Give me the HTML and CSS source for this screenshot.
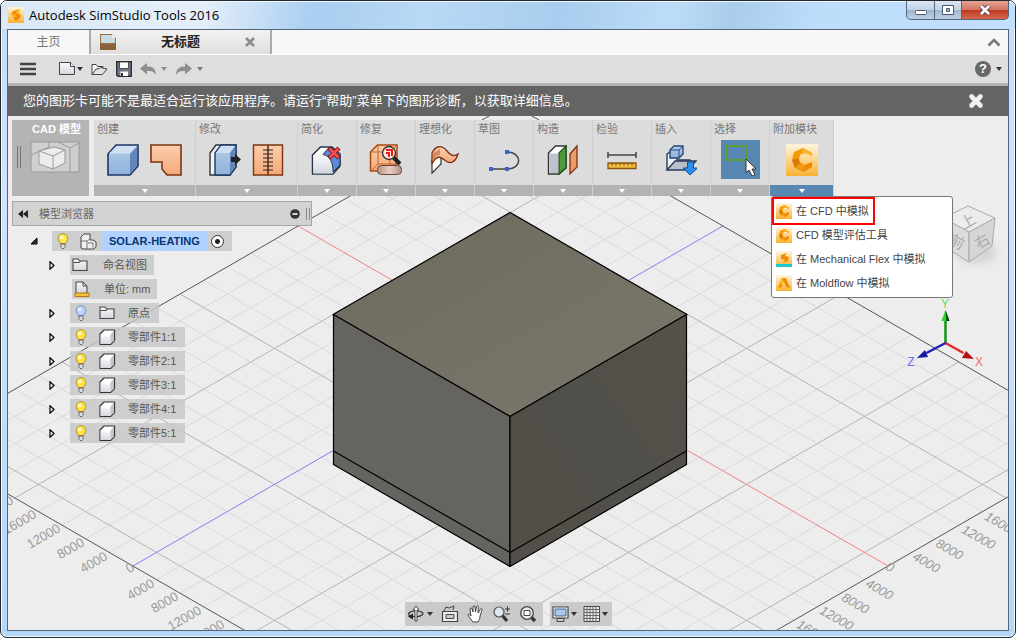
FILE: index.html
```html
<!DOCTYPE html>
<html lang="zh-CN">
<head>
<meta charset="utf-8">
<title>Autodesk SimStudio Tools 2016</title>
<link rel="stylesheet" href="styles.css">
</head>
<body>
<svg class="defs" width="0" height="0" aria-hidden="true">
  <defs>
    <linearGradient id="gBlue" x1="0" y1="0" x2="0" y2="1"><stop offset="0" stop-color="#b4cdea"/><stop offset="1" stop-color="#8fb2dc"/></linearGradient>
    <linearGradient id="gOrange" x1="0" y1="0" x2="0" y2="1"><stop offset="0" stop-color="#fccfae"/><stop offset="1" stop-color="#f5a878"/></linearGradient>
    <linearGradient id="gAmber" x1="0" y1="0" x2="0" y2="1"><stop offset="0" stop-color="#fff6df"/><stop offset="1" stop-color="#f9b233"/></linearGradient>
    <linearGradient id="gGrey" x1="0" y1="0" x2="0" y2="1"><stop offset="0" stop-color="#fafafa"/><stop offset="1" stop-color="#d2d6de"/></linearGradient>
    <linearGradient id="gTop" x1="0" y1="0" x2="1" y2="1"><stop offset="0" stop-color="#6e6a5e"/><stop offset="1" stop-color="#7c776c"/></linearGradient>
    <linearGradient id="gRight" x1="0" y1="1" x2="1" y2="0"><stop offset="0" stop-color="#544f48"/><stop offset="0.5" stop-color="#504f49"/><stop offset="1" stop-color="#56524a"/></linearGradient>
    <linearGradient id="gSkin" x1="0" y1="0" x2="1" y2="0"><stop offset="0" stop-color="#b98f85"/><stop offset="0.5" stop-color="#e9cfc6"/><stop offset="1" stop-color="#b98f85"/></linearGradient>
    <symbol id="bulb" viewBox="0 0 12 16">
      <path d="M6 .7a4.8 4.8 0 0 1 4.8 4.8c0 2-1.600 3-2.300 5h-5c-.7-2-2.300-3-2.300-5A4.800 4.800 0 0 1 6 .7z" fill="#ffe74a" stroke="#b5902a"/>
      <circle cx="4.800" cy="4.500" r="1.800" fill="#fffbd0"/>
      <path d="M4 11h4v3.500l-1 1H5l-1-1z" fill="#ddd" stroke="#555" stroke-width=".8"/>
    </symbol>
    <symbol id="bulbBlue" viewBox="0 0 12 16">
      <path d="M6 .7a4.800 4.800 0 0 1 4.800 4.800c0 2-1.600 3-2.300 5h-5c-.7-2-2.300-3-2.300-5A4.800 4.800 0 0 1 6 .7z" fill="#bcd3fb" stroke="#7791c4"/>
      <circle cx="4.800" cy="4.500" r="1.800" fill="#eef4ff"/>
      <path d="M4 11h4v3.500l-1 1H5l-1-1z" fill="#ddd" stroke="#555" stroke-width=".8"/>
    </symbol>
    <symbol id="part" viewBox="0 0 17 17">
      <path d="M1 5l4-4h10.500v10.500l-4 4H1z" fill="#fff" stroke="#333" stroke-width="1.200" stroke-linejoin="round"/>
      <path d="M1.600 5.500h9.900v9.500H1.600z" fill="url(#gGrey)"/><path d="M11.500 5.500l3.500-4v10l-3.500 3.500z" fill="#bfc4ce"/>
    </symbol>
    <symbol id="folder" viewBox="0 0 17 14">
      <path d="M1 12.500V1h5l1.500 2H15v9.500z" fill="url(#gGrey)" stroke="#444" stroke-width="1.100"/><path d="M1.500 4.500h6l1-1.300" fill="none" stroke="#444"/>
    </symbol>
    <symbol id="cfd" viewBox="0 0 32 32">
      <path d="M0 0h32v32H0z" fill="url(#gAmber)"/>
      <path d="M26 9l-9-5-9 4-2 8 3 8 8 4 9-5v-5l-7 3-5-3-1-4 2-4 5-1 6 3z" fill="#f39a0d"/>
      <path d="M26 9l-9-5-1 6 4-1 6 3z" fill="#f9b32a"/><path d="M6 16l6-2 2 5-5 5z" fill="#d97a06"/><path d="M17 28l2-7 7-3v5z" fill="#e88a08"/>
    </symbol>
    <symbol id="more" viewBox="0 0 6 4"><path d="M0 0h6L3 4z" fill="currentColor"/></symbol>
    <symbol id="twisty" viewBox="0 0 6 9"><path d="M1 .8l4 3.700-4 3.700z" fill="#fff" stroke="#000" stroke-width="1.200"/></symbol>
  </defs>
</svg>

<div class="window">
  <header class="titlebar">
    <svg class="logo" width="16" height="16" viewBox="0 0 16 16"><path d="M0 0h16v16H0z" fill="url(#gAmber)"/><path d="M12 2L5 4 3 7l3 3v2l2 2 4-3 1-3-4-2z" fill="#f08c00"/><path d="M12 2L7 6l2 0 4 2-1-2z" fill="#ffc53a"/><path d="M3 7l4 0 2 3-3 0z" fill="#ffb21c"/></svg>
    <h1 class="title">Autodesk SimStudio Tools 2016</h1>
    <div class="win-buttons">
      <button class="win-btn" aria-label="最小化"><svg width="14" height="12"><rect x="1.500" y="6.500" width="11" height="4" rx="1" fill="#fff" stroke="#4c5a70"/></svg></button>
      <button class="win-btn win-max" aria-label="最大化"><svg width="14" height="12"><path d="M1.500 1.500h11v9h-11z" fill="#fff" stroke="#4c5a70"/><path d="M5.500 4.500h3v3h-3z" fill="#9db8d4" stroke="#4c5a70"/></svg></button>
      <button class="win-btn win-close" aria-label="关闭"><svg width="14" height="12"><path d="M3 2l8 8M11 2l-8 8" stroke="#5b3b42" stroke-width="4.500"/><path d="M3 2l8 8M11 2l-8 8" stroke="#fff" stroke-width="2.600"/></svg></button>
    </div>
  </header>

  <main class="app">
    <nav class="tabs">
      <button class="tab">主页</button>
      <div class="tab tab-active">
        <svg width="17" height="16"><path d="M0 0h12l4 4v12H0z" fill="#9a7048"/><path d="M1 1h11l3 3v5H1z" fill="#c5dbe0"/><path d="M0 9l8 2 8-2v7H0z" fill="#8a6038"/><path d="M12 0v4h4z" fill="#f0f0e8"/></svg>
        <span class="tab-name">无标题</span>
        <button class="icon-btn" aria-label="关闭标签"><svg width="12" height="12"><path d="M2 2l8 8M10 2l-8 8" stroke="#8d8d8d" stroke-width="2.600"/></svg></button>
      </div>
      <button class="icon-btn collapse" aria-label="折叠"><svg width="14" height="9"><path d="M1.500 7.500L7 2l5.500 5.500" fill="none" stroke="#777" stroke-width="2.500"/></svg></button>
    </nav>

    <div class="toolbar">
      <button class="icon-btn tb-menu" aria-label="菜单"><svg width="18" height="14"><path d="M1 2h16M1 7h16M1 12h16" stroke="#444" stroke-width="2.600"/></svg></button>
      <button class="icon-btn tb-new" aria-label="新建"><svg width="24" height="14"><path d="M.5.5h11l4 4v8H.5z" fill="url(#gGrey)" stroke="#444"/><path d="M11.500.5v4h4" fill="#fff" stroke="#444"/><path d="M18 5h6l-3 4z" fill="#333"/></svg></button>
      <button class="icon-btn" aria-label="打开"><svg width="17" height="13"><path d="M1 11.500V1.500h4l1.500 2H12v2.500" fill="#f4f4f4" stroke="#444"/><path d="M1 11.500L5 6l3-.3L9.500 4.500 16 6l-4.500 5.500z" fill="#dfe3ea" stroke="#444"/></svg></button>
      <button class="icon-btn" aria-label="保存"><svg width="16" height="16"><path d="M.7.7h14.600v14.600H2L.7 14z" fill="#707886" stroke="#2b2f38" stroke-width="1.400"/><path d="M3.500 1h9v6.500h-9z" fill="#fafafa" stroke="#333" stroke-width=".8"/><path d="M4.500 10.500h7.500v4.500H4.500z" fill="#fff"/><path d="M5 12h2v3H5z" fill="#333"/></svg></button>
      <button class="icon-btn" aria-label="撤消"><svg width="28" height="13"><path d="M0 5.500L7 0v3.500c5 0 9 1.500 9 8.500-2-3.500-4-4-9-4v3.500z" fill="#8e8e8e"/><path d="M21 4h6l-3 4z" fill="#8e8e8e"/></svg></button>
      <button class="icon-btn" aria-label="重做"><svg width="28" height="13"><path d="M16 5.500L9 0v3.500C4 3.500 0 5 0 12c2-3.500 4-4 9-4v3.500z" fill="#8e8e8e"/><path d="M21 4h6l-3 4z" fill="#777"/></svg></button>
      <button class="help" aria-label="帮助"><span class="help-mark">?</span><svg width="6" height="4"><use href="#more"/></svg></button>
    </div>

    <div class="notice">
      <p class="notice-text">您的图形卡可能不是最适合运行该应用程序。请运行“帮助”菜单下的图形诊断，以获取详细信息。</p>
      <button class="icon-btn" aria-label="关闭通知"><svg width="16" height="16"><path d="M3.500 3.500l9 9M12.500 3.500l-9 9" stroke="#f0f0f0" stroke-width="4.600" stroke-linecap="round"/></svg></button>
    </div>

    <section class="workspace">
      <svg class="scene" viewBox="8 116 1000 514" preserveAspectRatio="xMidYMid slice">
        <g transform="matrix(23.600 13.600 -23.600 13.600 510.500 348.400)" fill="none">
          <path class="line minor" d="M-8-9V16M-7-9V16M-6-9V16M-4-9V16M-3-9V16M-2-9V16M-1-9V16M1-9V16M2-9V16M3-9V16M4-9V16M6-9V16M7-9V16M8-9V16M9-9V16M11-9V16M12-9V16M13-9V16M14-9V16M-9-8H16M-9-7H16M-9-6H16M-9-4H16M-9-3H16M-9-2H16M-9-1H16M-9 1H16M-9 2H16M-9 3H16M-9 4H16M-9 6H16M-9 7H16M-9 8H16M-9 9H16M-9 11H16M-9 12H16M-9 13H16M-9 14H16"/>
          <path class="line major" d="M-5-9V16M5-9V16M10-9V16M15-9V16M-9-5H16M-9 5H16M-9 10H16M-9 15H16"/>
          <path class="line axis-x" d="M-9 0H16"/>
          <path class="line axis-z" d="M0-9V16"/>
          <path class="line edge" d="M-9-9H16V16H-9z"/>
        </g>
        <g class="ticks ticks-left">
          <text transform="translate(12 499) rotate(-30)">20000</text>
          <text transform="translate(35 513) rotate(-30)">16000</text>
          <text transform="translate(59 527) rotate(-30)">12000</text>
          <text transform="translate(83 541) rotate(-30)">8000</text>
          <text transform="translate(106 555) rotate(-30)">4000</text>
          <text transform="translate(133 566) rotate(-30)">0</text>
          <text transform="translate(153 582) rotate(-30)">4000</text>
          <text transform="translate(177 595) rotate(-30)">8000</text>
          <text transform="translate(200 609) rotate(-30)">12000</text>
          <text transform="translate(223 623) rotate(-30)">16000</text>
        </g>
        <g class="ticks ticks-right">
          <text transform="translate(986 515) rotate(30)">16000</text>
          <text transform="translate(963 528) rotate(30)">12000</text>
          <text transform="translate(937 542) rotate(30)">8000</text>
          <text transform="translate(914 555) rotate(30)">4000</text>
          <text transform="translate(887 565) rotate(30)">0</text>
          <text transform="translate(867 582) rotate(30)">4000</text>
          <text transform="translate(843 596) rotate(30)">8000</text>
          <text transform="translate(821 609) rotate(30)">12000</text>
          <text transform="translate(798 623) rotate(30)">16000</text>
        </g>
        <g stroke="#000" stroke-width="1.200" stroke-linejoin="round">
          <path d="M510 212.500l177 102-177 102-177-102z" fill="url(#gTop)"/>
          <path d="M333.500 314.500L510 416.500v150L333.500 464.500z" fill="#656460"/>
          <path d="M686.500 314.500L510 416.500v150l176.500-102z" fill="url(#gRight)"/>
          <path d="M333.500 451l176.500 101.500L686.500 451" fill="none"/>
        </g>
        <g>
          <ellipse cx="976" cy="252" rx="20" ry="12" fill="#bbb" opacity=".5" filter="blur(4px)"/>
          <path d="M968 206l27 12-26 14-26-14z" fill="#ececec" stroke="#aaa"/>
          <path d="M943 218l26 14v30l-24-15z" fill="#dcdcdc" stroke="#aaa"/>
          <path d="M995 218l-26 14v30l23-16z" fill="#d6d6d6" stroke="#aaa"/>
          <g class="cube-text"><text transform="translate(968 221) rotate(-30)">上</text><text transform="translate(957 242) rotate(28)">前</text><text transform="translate(982 241) rotate(-30)">右</text></g>
        </g>
        <g class="triad">
          <path d="M945.500 343v-24" stroke="#159015" stroke-width="2.500"/><path d="M941.500 321l4-11 4 11z" fill="#25d425"/><path d="M945.500 310l4 11h-3z" fill="#0a3d0a"/>
          <path d="M945.500 343l18 10" stroke="#e02a2a" stroke-width="2.500"/><path d="M974 359l-12-1 4-7z" fill="#b31313"/>
          <path d="M945.500 343l-19 10" stroke="#2020b8" stroke-width="2.500"/><path d="M917 358l8-8 3 7z" fill="#1515a8"/>
          <text x="945" y="308" fill="#5ddb5d">Y</text><text x="979" y="366" fill="#f06a6a">X</text><text x="911" y="366" fill="#6d6df0">Z</text>
        </g>
      </svg>

      <div class="ribbon">
        <button class="mode">
          <span class="mode-name">CAD 模型</span>
          <span class="mode-body">
            <svg width="6" height="24"><path d="M1.500 1v22M4.500 1v22" stroke="#777"/></svg>
            <svg width="50" height="32"><path d="M1 1h48v30H1z" fill="#cfcfcf" stroke="#999"/><path d="M19 1v5l-18 8M28 1l12 6 9-5M40 7v24" fill="none" stroke="#999"/><path d="M9 10l15-4 11 3v13l-12 6-14-5z" fill="#ececec" stroke="#999"/><path d="M9 10l14 5 12-6M23 15v13" fill="none" stroke="#999"/></svg>
          </span>
        </button>
        <div class="groups">
          <section class="group wide"><h2 class="group-name">创建</h2><div class="group-icons">
            <button class="icon-btn" aria-label="方块"><svg width="32" height="32"><path d="M1 10l8-9h22v21l-8 9H1z" fill="url(#gBlue)" stroke="#1c3766" stroke-width="1.600"/><path d="M2 9.500L9.500 2H30l-7.500 7.500z" fill="#cfe0f4"/><path d="M30 2.500V22l-7 8V10z" fill="#6485b8"/></svg></button>
            <button class="icon-btn" aria-label="面片"><svg width="32" height="32"><path d="M1 1h30v30H17l-5-6v-7H1z" fill="url(#gOrange)" stroke="#7c3311" stroke-width="1.600"/></svg></button>
          </div><button class="group-more" aria-label="更多创建"><svg width="6" height="4"><use href="#more"/></svg></button></section>
          <section class="group wide"><h2 class="group-name">修改</h2><div class="group-icons">
            <button class="icon-btn" aria-label="按拉"><svg width="32" height="32"><path d="M1 9l6-8h20v22l-6 8H1z" fill="#f2f2f2" stroke="#333" stroke-width="1.400"/><path d="M6 9l6-8h15v22l-6 8H6z" fill="url(#gBlue)" stroke="#1c3766" stroke-width="1.400"/><path d="M7 9l5-7h14l-5 7z" fill="#cfe0f4"/><path d="M26 2v21l-5 7V9z" fill="#6485b8"/><path d="M22 13h4v-3l6 5.500-6 5.500v-3h-4z" fill="#222"/></svg></button>
            <button class="icon-btn" aria-label="缝合"><svg width="32" height="32"><path d="M1.500 1h29v30h-29z" fill="url(#gOrange)" stroke="#7c3311" stroke-width="1.400"/><path d="M16 1v30" stroke="#5d2c14" stroke-width="1.500"/><path d="M11 6h10M11 10h10M11 14h10M11 18h10M11 22h10M11 26h10" stroke="#222" stroke-width="1.200"/></svg></button>
          </div><button class="group-more" aria-label="更多修改"><svg width="6" height="4"><use href="#more"/></svg></button></section>
          <section class="group"><h2 class="group-name">简化</h2><div class="group-icons">
            <button class="icon-btn" aria-label="删除圆角"><svg width="32" height="32"><path d="M1.500 11l8-8H21l8 7v12l-7 8H1.500z" fill="#fff" stroke="#27344c" stroke-width="1.500"/><path d="M2.500 11H12c5 1 8 5 9 11v7.500H2.500z" fill="url(#gGrey)"/><path d="M12 10.500l6-7h3l8 7V21l-7 7c0-10-3-16-10-17.500z" fill="#5d8ad2" stroke="#27344c"/><path d="M18 4l10 10M28 4L18 14" stroke="#8d1010" stroke-width="4.500"/><path d="M18.500 4.500l9 9M27.500 4.500l-9 9" stroke="#f45050" stroke-width="2.600"/></svg></button>
          </div><button class="group-more" aria-label="更多简化"><svg width="6" height="4"><use href="#more"/></svg></button></section>
          <section class="group"><h2 class="group-name">修复</h2><div class="group-icons">
            <button class="icon-btn" aria-label="查找并修复"><svg width="34" height="32"><path d="M1.500 8l7-7H28v18l-7 8H1.500z" fill="url(#gOrange)" stroke="#a6490f" stroke-width="1.500"/><path d="M1.500 8H21v19M21 8l7-7M9 1v19l-7 7M9 20h18" fill="none" stroke="#c0642a"/><path d="M24 13l7 7" stroke="#222" stroke-width="4"/><circle cx="20" cy="9" r="6.500" fill="#ffe9dc" stroke="#333" stroke-width="1.400"/><path d="M17 6h6v6M17 9h3v4" fill="none" stroke="#f01818" stroke-width="2"/><rect x="8.500" y="21.500" width="24" height="9" rx="4" fill="url(#gSkin)" stroke="#6d423a"/></svg></button>
          </div><button class="group-more" aria-label="更多修复"><svg width="6" height="4"><use href="#more"/></svg></button></section>
          <section class="group"><h2 class="group-name">理想化</h2><div class="group-icons">
            <button class="icon-btn" aria-label="中间面"><svg width="32" height="32"><path d="M3 16v13l9-9v-9z" fill="#fff" stroke="#333" stroke-width="1.200"/><path d="M3 20V9c4-8 10-8 15-2s8 5 11 3c-2 7-7 11-12 7S8 10 3 20z" fill="url(#gOrange)" stroke="#7a3412" stroke-width="1.300"/><path d="M4 17V9l7-4v6c-4 0-6 4-7 6z" fill="#d98a62"/></svg></button>
          </div><button class="group-more" aria-label="更多理想化"><svg width="6" height="4"><use href="#more"/></svg></button></section>
          <section class="group"><h2 class="group-name">草图</h2><div class="group-icons">
            <button class="icon-btn" aria-label="绘制草图"><svg width="32" height="32"><path d="M3 25h16c16 0 15-17 0-17" fill="none" stroke="#444" stroke-width="1.500"/><path d="M1 23h4v4H1zM17 23h4v4h-4zM17 6h4v4h-4z" fill="#3567c8"/></svg></button>
          </div><button class="group-more" aria-label="更多草图"><svg width="6" height="4"><use href="#more"/></svg></button></section>
          <section class="group"><h2 class="group-name">构造</h2><div class="group-icons">
            <button class="icon-btn" aria-label="偏移平面"><svg width="32" height="32"><path d="M1.500 9l7-7H19v22l-7 6H1.500z" fill="#fff" stroke="#333" stroke-width="1.400"/><path d="M2.500 9.500H11V29H2.500z" fill="#bcc2d0"/><path d="M12 9l7-7v22l-7 6z" fill="#4e9a3c" stroke="#24531a" stroke-width="1.300"/><path d="M23 10l7-8v21l-7 7z" fill="#ec9a66" stroke="#7c3311" stroke-width="1.300"/></svg></button>
          </div><button class="group-more" aria-label="更多构造"><svg width="6" height="4"><use href="#more"/></svg></button></section>
          <section class="group"><h2 class="group-name">检验</h2><div class="group-icons">
            <button class="icon-btn" aria-label="测量"><svg width="32" height="32"><path d="M2 11h28M2 8v6M30 8v6" stroke="#444" stroke-width="1.500"/><path d="M2 19h28v5.500H2z" fill="#f2bd3a" stroke="#8a5510" stroke-width="1.300"/><path d="M6 19v2.500M10 19v2.500M14 19v2.500M18 19v2.500M22 19v2.500M26 19v2.500" stroke="#6a4208"/></svg></button>
          </div><button class="group-more" aria-label="更多检验"><svg width="6" height="4"><use href="#more"/></svg></button></section>
          <section class="group"><h2 class="group-name">插入</h2><div class="group-icons">
            <button class="icon-btn" aria-label="插入部件"><svg width="32" height="32"><path d="M2 26V10l3-2h7v8h13v3" fill="#eef1f6" stroke="#2a3a56" stroke-width="1.400"/><path d="M2 26l8-9h21l-9 9z" fill="#b9bfc9" stroke="#2a3a56" stroke-width="1.400"/><path d="M5 6l4-4h9v8l-4 4H5z" fill="url(#gBlue)" stroke="#23487e" stroke-width="1.400"/><path d="M5 6h9v8M14 6l4-4" fill="none" stroke="#23487e"/><path d="M22.500 18h6v6h4L25 31l-7-7h4.500z" fill="#2b8df0" stroke="#14509a"/></svg></button>
          </div><button class="group-more" aria-label="更多插入"><svg width="6" height="4"><use href="#more"/></svg></button></section>
          <section class="group"><h2 class="group-name">选择</h2><div class="group-icons">
            <button class="icon-btn selected" aria-label="窗口选择"><svg width="32" height="32"><path d="M2 2h20v14H2z" fill="none" stroke="#63a117" stroke-width="1.600"/><path d="M22 15v14l3-3 3 6 3-1.500-3-5.500h4z" fill="#fff" stroke="#333"/></svg></button>
          </div><button class="group-more" aria-label="更多选择"><svg width="6" height="4"><use href="#more"/></svg></button></section>
          <section class="group addins"><h2 class="group-name">附加模块</h2><div class="group-icons">
            <button class="icon-btn" aria-label="CFD"><svg width="32" height="32"><use href="#cfd"/></svg></button>
          </div><button class="group-more open" aria-label="更多附加模块"><svg width="6" height="4"><use href="#more"/></svg></button>
            <div class="menu">
              <button class="menu-item marked"><svg width="16" height="16"><use href="#cfd"/></svg>在 CFD 中模拟</button>
              <button class="menu-item"><svg width="16" height="16"><use href="#cfd"/></svg>CFD 模型评估工具</button>
              <button class="menu-item"><svg width="16" height="16"><path d="M0 0h16v16H0z" fill="url(#gAmber)"/><path d="M0 13h16v3H0z" fill="#1ec8cc"/><path d="M11 2L5 4v4l4 1-2 3 5-2 1-4-4-1z" fill="#f08c00"/></svg>在 Mechanical Flex 中模拟</button>
              <button class="menu-item"><svg width="16" height="16"><path d="M0 0h16v16H0z" fill="url(#gAmber)"/><path d="M2 13L6 3h4l4 10-4-1-2-5-2 5z" fill="#f08c00"/><path d="M6 3l2 4-2 5-1-4z" fill="#ffc02a"/></svg>在 Moldflow 中模拟</button>
            </div>
          </section>
        </div>
      </div>

      <aside class="browser">
        <header class="browser-head">
          <button class="icon-btn" aria-label="收起浏览器"><svg width="12" height="8"><path d="M6 0v8L1 4zM11 0v8L6 4z" fill="#222"/></svg></button>
          <h2 class="browser-title">模型浏览器</h2>
          <button class="icon-btn" aria-label="隐藏"><svg width="10" height="10"><circle cx="5" cy="5" r="4.800" fill="#333"/><path d="M2.500 5h5" stroke="#fff" stroke-width="1.600"/></svg></button>
          <svg width="4" height="12"><path d="M.5 0v12M3.500 0v12" stroke="#888"/></svg>
        </header>
        <ul class="tree">
          <li class="node root"><svg class="twisty" width="8" height="8"><path d="M7 1v6H1z" fill="#333" stroke="#000"/></svg><div class="chip"><svg width="12" height="16"><use href="#bulb"/></svg><svg width="17" height="17"><path d="M1 4l3-3h6v6h3l3 2v5l-2 2H3l-2-1z" fill="#f0f0f2" stroke="#444"/><path d="M1 8h6v8M7 8l3-2M8 10h5v5" fill="none" stroke="#777"/></svg><span class="root-name">SOLAR-HEATING</span><input class="activate" type="radio" name="active" aria-label="激活 SOLAR-HEATING" checked></div></li>
          <li class="node"><svg class="twisty" width="6" height="9"><use href="#twisty"/></svg><div class="chip views"><svg width="17" height="14"><use href="#folder"/></svg><span>命名视图</span></div></li>
          <li class="node leaf"><div class="chip units"><svg width="16" height="16"><path d="M2 12V1h7l4 4v7" fill="url(#gGrey)" stroke="#444"/><path d="M9 1v4h4" fill="none" stroke="#444"/><path d="M1 12h14v3.500H1z" fill="#f5c040" stroke="#b07808"/></svg><span>单位: mm</span></div></li>
          <li class="node"><svg class="twisty" width="6" height="9"><use href="#twisty"/></svg><div class="chip"><svg width="12" height="16"><use href="#bulbBlue"/></svg><svg width="17" height="14"><use href="#folder"/></svg><span>原点</span></div></li>
          <li class="node"><svg class="twisty" width="6" height="9"><use href="#twisty"/></svg><div class="chip"><svg width="12" height="16"><use href="#bulb"/></svg><svg width="17" height="17"><use href="#part"/></svg><span>零部件1:1</span></div></li>
          <li class="node"><svg class="twisty" width="6" height="9"><use href="#twisty"/></svg><div class="chip"><svg width="12" height="16"><use href="#bulb"/></svg><svg width="17" height="17"><use href="#part"/></svg><span>零部件2:1</span></div></li>
          <li class="node"><svg class="twisty" width="6" height="9"><use href="#twisty"/></svg><div class="chip"><svg width="12" height="16"><use href="#bulb"/></svg><svg width="17" height="17"><use href="#part"/></svg><span>零部件3:1</span></div></li>
          <li class="node"><svg class="twisty" width="6" height="9"><use href="#twisty"/></svg><div class="chip"><svg width="12" height="16"><use href="#bulb"/></svg><svg width="17" height="17"><use href="#part"/></svg><span>零部件4:1</span></div></li>
          <li class="node"><svg class="twisty" width="6" height="9"><use href="#twisty"/></svg><div class="chip"><svg width="12" height="16"><use href="#bulb"/></svg><svg width="17" height="17"><use href="#part"/></svg><span>零部件5:1</span></div></li>
        </ul>
      </aside>

      <div class="viewbar">
        <div class="view-group">
          <button class="icon-btn" aria-label="动态观察"><svg width="26" height="18"><path d="M3 11c-4-3 1-5 6-5s9 2 6 4-8 2-12 1" fill="none" stroke="#333" stroke-width="1.200"/><path d="M8 16V5H6l3-4 3 4h-2v11z" fill="#fff" stroke="#333" stroke-width=".9"/><path d="M1 11.500l5-3v6z" fill="#222"/><path d="M20 7h6l-3 4z" fill="#333"/></svg></button>
          <button class="icon-btn" aria-label="观察方向"><svg width="18" height="18"><path d="M1.500 6.500h15v10h-15z" fill="#eee" stroke="#444" stroke-width="1.200"/><path d="M5 9.500h8v4H5z" fill="#c9ccd2" stroke="#444"/><path d="M3 6l2-4 3 1 5-2-1 4" fill="none" stroke="#444"/></svg></button>
          <button class="icon-btn" aria-label="平移"><svg width="18" height="18"><path d="M5 16l-4-6c0-1.500 1.500-1 3 1L3 4c0-1.500 1.500-1.500 2 0l1 3 0-5c0-1.500 2-1.500 2 0l.5 5 1-5.500c.5-1 2-.5 1.800.7L11 8l2.500-4c1-1 2 0 1.500 1l-2 6c0 3-1 4-2 6H6z" fill="#fff" stroke="#333" stroke-width=".9"/></svg></button>
          <button class="icon-btn" aria-label="缩放"><svg width="18" height="18"><path d="M9 10l5 6" stroke="#333" stroke-width="3.200"/><circle cx="6" cy="7" r="5" fill="#dde8ec" stroke="#555" stroke-width="1.200"/><path d="M12 4h5M14.500 1.500v5M12 9h5" stroke="#333"/></svg></button>
          <button class="icon-btn" aria-label="窗口缩放"><svg width="18" height="18"><path d="M11 11l5 5" stroke="#333" stroke-width="3.200"/><circle cx="8" cy="8" r="6.300" fill="#e8ecee" stroke="#444" stroke-width="1.300"/><path d="M5 5.500h6v5H5z" fill="#fff" stroke="#444"/></svg></button>
        </div>
        <div class="view-group">
          <button class="icon-btn" aria-label="显示设置"><svg width="26" height="18"><path d="M1 2h15v11H1z" fill="#fff" stroke="#444" stroke-width="1.200"/><path d="M3 4h11v7H3z" fill="#a9c8ee" stroke="#41628f"/><path d="M5 16.500h7v-3H5z" fill="#ccc" stroke="#444"/><path d="M19 7h6l-3 4z" fill="#333"/></svg></button>
          <button class="icon-btn" aria-label="栅格"><svg width="26" height="18"><path d="M1 1.500h15.500v15H1z" fill="#eee" stroke="#444"/><path d="M4 1.500v15M7 1.500v15M10 1.500v15M13 1.500v15M1 4.500h15.500M1 7.500h15.500M1 10.500h15.500M1 13.500h15.500" stroke="#666"/><path d="M19 7h6l-3 4z" fill="#333"/></svg></button>
        </div>
      </div>
    </section>
  </main>
</div>
</body>
</html>
```
FILE: styles.css
```css
* { box-sizing: border-box; }

body {
  margin: 0;
  font: 11px/16px "Liberation Sans", "Noto Sans CJK SC", sans-serif;
  color: #444;
  background: #fff;
}

h1, h2, p, ul { margin: 0; padding: 0; font-weight: normal; }
svg { display: block; flex: none; }
button { font: inherit; color: inherit; margin: 0; padding: 0; border: 0; background: none; }
.defs { position: absolute; }
.icon-btn { display: flex; align-items: center; justify-content: center; }

/* Window frame */
.window {
  display: flex;
  flex-direction: column;
  min-height: 100vh;
  border: 1px solid #23272e;
  border-radius: 7px;
  box-shadow: inset 0 0 0 1px #f2f9ff;
  background: linear-gradient(#c3ddf5, #cfe4fb 30%, #b4d6f8);
}
.titlebar {
  display: flex;
  align-items: center;
  height: 28px;
  padding-left: 7px;
  border-radius: 6px 6px 0 0;
  box-shadow: inset 0 1px #f2f9ff;
  background: linear-gradient(100deg, #d9e8f5 0, #e4eff9 20%, #a9cef0 31%, #b9d9f5 42%, #a8cdee 55%, #bddcf8 66%, #a9cdea 72%, #bcdcfa 80%, #c2e0fc 100%);
}
.title {
  flex: 1;
  margin-left: 5px;
  font: 13px/18px "Open Sans", "Noto Sans", sans-serif;
  color: #000;
}
.win-buttons { display: flex; align-self: flex-start; margin-right: 6px; }
.win-btn {
  display: flex;
  align-items: center;
  justify-content: center;
  width: 29px;
  height: 19px;
  border: 1px solid #53647c;
  border-top: 0;
  border-radius: 0 0 0 5px;
  background: linear-gradient(#dce7f2, #c2d3e5 48%, #9fb5ce 50%, #bdd0e4);
}
.win-max { width: 27px; border-left: 0; border-radius: 0; }
.win-close {
  width: 47px;
  border-left: 0;
  border-radius: 0 0 5px 0;
  background: linear-gradient(#e4a394, #d47563 48%, #bd3820 50%, #d5694c);
}

.app {
  display: flex;
  flex: 1;
  flex-direction: column;
  margin: 0 6px 6px;
  border: 1px solid #53677c;
  background: #ededed;
}

/* Tabs */
.tabs { display: flex; height: 25px; border-bottom: 1px solid #fff; background: #f7f7f7; }
.tab {
  display: flex;
  align-items: center;
  justify-content: center;
  width: 83px;
  border-right: 2px solid #aaa;
  font-size: 12px;
  color: #777;
}
.tab-active {
  justify-content: space-between;
  width: 181px;
  padding: 0 14px 0 9px;
  background: linear-gradient(#f2f2f2, #dedede);
}
.tab-name { font-size: 13px; font-weight: bold; color: #222; padding-left: 30px; margin-right: 30px; }
.collapse { margin: 0 7px 0 auto; }

/* Quick access toolbar */
.toolbar {
  display: flex;
  align-items: center;
  gap: 8px;
  height: 31px;
  padding: 0 6px 0 11px;
  border-bottom: 3px solid #b3b3b3;
  background: #dedede;
}
.tb-menu { margin-right: 14px; }
.help { display: flex; align-items: center; gap: 5px; margin-left: auto; color: #333; }
.help-mark {
  width: 16px;
  height: 16px;
  border-radius: 8px;
  background: #686868;
  color: #fff;
  font-size: 13px;
  font-weight: bold;
  text-align: center;
}

.notice {
  display: flex;
  align-items: center;
  justify-content: space-between;
  height: 30px;
  padding: 0 24px 0 15px;
  background: #646464;
}
.notice-text { font-size: 13px; line-height: 20px; color: #fff; }

/* Workspace */
.workspace {
  position: relative;
  display: flex;
  flex: 1;
  flex-direction: column;
  padding: 4px;
  overflow: hidden;
}
.scene { position: absolute; inset: 0; width: 100%; height: 100%; }
.line { vector-effect: non-scaling-stroke; stroke-width: 1px; }
.minor { stroke: #dadada; }
.major { stroke: #b4b4b4; }
.axis-x { stroke: #f48080; }
.axis-z { stroke: #8080f4; }
.edge { stroke: #555; }
.ticks { font-size: 13px; fill: #999; dominant-baseline: central; }
.ticks-left { text-anchor: end; }
.ticks-right { font-style: italic; }
.cube-text { font-size: 15px; fill: #aaa; text-anchor: middle; dominant-baseline: central; }
.triad { font-size: 12px; text-anchor: middle; }

/* Ribbon */
.ribbon { position: relative; z-index: 2; display: flex; gap: 5px; height: 76px; }
.mode { display: flex; flex-direction: column; width: 77px; background: #b4b4b4; color: #fff; font-weight: bold; }
.mode-name { padding: 1px 8px 0 0; align-self: flex-end; }
.mode-body { display: flex; align-items: center; gap: 8px; padding: 4px 0 0 4px; }
.groups { display: flex; }
.group {
  position: relative;
  display: flex;
  flex-direction: column;
  width: 59px;
  border-right: 1px solid #cfcfcf;
  background: #dcdcdc;
}
.wide { width: 102px; }
.addins { width: 64px; }
.group-name { padding: 1px 0 0 3px; font-size: 11px; line-height: 16px; color: #777; }
.group-icons { display: flex; flex: 1; align-items: center; justify-content: center; gap: 11px; padding-bottom: 3px; }
.selected { width: 39px; height: 39px; background: #5788b1; }
.group-more {
  display: flex;
  align-items: center;
  justify-content: center;
  height: 11px;
  background: #b3b3b3;
  color: #fff;
}
.group-more.open { background: #5788b1; }

.menu {
  position: absolute;
  top: 76px;
  left: 1px;
  width: 182px;
  padding: 2px;
  border: 1px solid #777;
  border-radius: 3px;
  background: #fff;
}
.menu-item {
  display: flex;
  align-items: center;
  gap: 4px;
  width: 100%;
  height: 24px;
  padding-left: 2px;
  white-space: nowrap;
}
.marked { width: auto; padding-right: 4px; outline: 2px solid #f00; }

/* Model browser */
.browser { position: relative; z-index: 1; margin-top: 5px; width: 300px; }
.browser-head {
  display: flex;
  align-items: center;
  gap: 6px;
  height: 25px;
  padding: 0 1px 0 4px;
  border: 1px solid #a6a6a6;
  background: #d2d2d2;
}
.browser-title { flex: 1; padding-left: 4px; font-size: 11px; color: #666; }
.tree { display: flex; flex-direction: column; gap: 4px; padding-top: 5px; list-style: none; }
.node { display: flex; align-items: center; gap: 15px; padding-left: 37px; color: #555; }
.root { gap: 14px; padding-left: 18px; }
.leaf { padding-left: 60px; }
.chip {
  display: flex;
  align-items: center;
  gap: 12px;
  height: 20px;
  padding: 0 9px 0 5px;
  background: rgba(200, 200, 200, 0.85);
}
.root .chip { gap: 11px; padding-right: 8px; }
.views, .units { gap: 14px; padding: 0 7px 0 2px; }
.root-name {
  margin: 0 -7px 0 -6px;
  padding: 0 7px;
  background: #b0d2ff;
  color: #0a3573;
  font-weight: bold;
  line-height: 20px;
}
.activate {
  appearance: none;
  width: 13px;
  height: 13px;
  margin: 0;
  border: 1px solid #333;
  border-radius: 50%;
  background: radial-gradient(circle, #222 0 2px, #fff 3px);
}

/* View controls */
.viewbar { position: relative; display: flex; gap: 7px; margin: auto auto 0; }
.view-group { display: flex; align-items: center; gap: 8px; height: 24px; padding: 0 6px 0 2px; background: #cacaca; }
.view-group + .view-group { gap: 5px; padding: 0 3px 0 2px; }
```
